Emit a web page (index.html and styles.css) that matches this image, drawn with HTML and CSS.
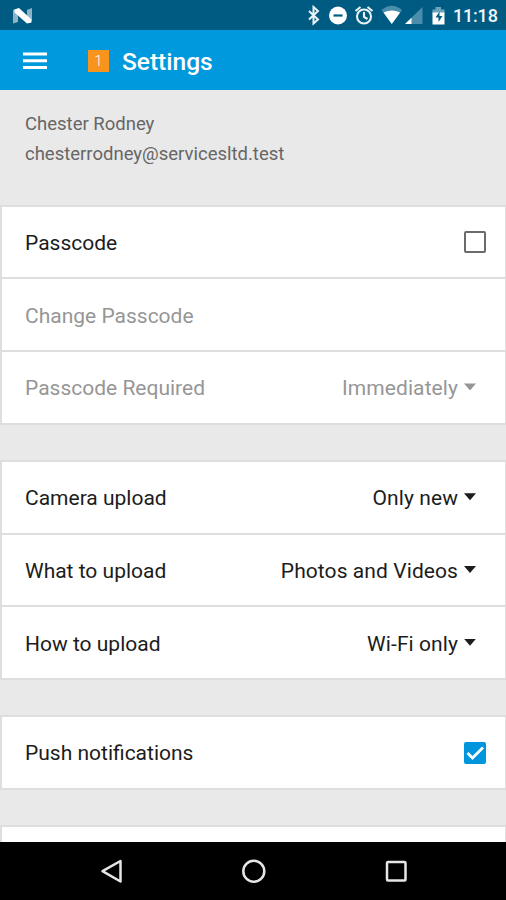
FILE: index.html
```html
<!DOCTYPE html>
<html lang="en">
<head>
<meta charset="utf-8">
<title>Settings</title>
<link rel="stylesheet" href="styles.css">
</head>
<body>
<div class="phone">
  <header class="status">
    <svg class="logo" width="22" height="18" viewBox="0 0 22 18"><path d="M1 3l5-1.500v13.500l-5 1.500z" fill="#8fb4c6"/><path d="M15 3l5-2v12l-5 3z" fill="#8fb4c6"/><path d="M2.500 2.500L7 1l12.500 11.500v3L15 16.500 2.500 5.500z" fill="#fff"/></svg>
    <svg class="status-icons" width="156" height="30" viewBox="300 0 156 30">
      <path d="M309 11l9 8.5-4.5 4V7l4.500 4-9 8.500" fill="none" stroke="#e8f2f7" stroke-width="2"/>
      <circle cx="338" cy="15.500" r="9" fill="#fff"/><path d="M333.500 15.500h9" stroke="#005b83" stroke-width="2.200"/>
      <g fill="none" stroke="#e8f2f7" stroke-width="2.100"><circle cx="364" cy="16.500" r="7"/><path d="M364 12v5l3.500 2M355.500 11l5-4M372.500 11l-5-4"/></g>
      <path d="M381.500 10q10.300-8.500 20.600 0L391.800 24z" fill="#4a8eac"/><path d="M383.500 12.500q8.300-4 16.600 0L391.800 24z" fill="#fff"/>
      <path d="M405 24L422.500 7v17z" fill="#4a8eac"/><path d="M405 24l6.500-6.300V24z" fill="#fff"/>
      <path d="M432.500 9.500h3V7h5.500v2.500h3.500V14h-12z" fill="#6da4bb"/><path d="M432.500 12.500h12v12h-12z" fill="#fff"/><path d="M439.500 11.500l-4 6h3v4.500l4-6h-3z" fill="#005b83"/>
    </svg>
    <span class="clock">11:18</span>
  </header>
  <div class="toolbar">
    <svg class="menu" width="24" height="18" viewBox="0 0 24 18"><path d="M0 2h24M0 8.700h24M0 15.500h24" stroke="#fff" stroke-width="3"/></svg>
    <span class="badge">1</span>
    <h1 class="title">Settings</h1>
  </div>
  <main class="content">
    <section class="account">
      <div class="name">Chester Rodney</div>
      <div class="email">chesterrodney@servicesltd.test</div>
    </section>
    <section class="group">
      <div class="row"><span class="label">Passcode</span><span class="checkbox"></span></div>
      <div class="row disabled"><span class="label">Change Passcode</span></div>
      <div class="row disabled"><span class="label">Passcode Required</span><span class="value">Immediately</span><i class="caret"></i></div>
    </section>
    <section class="group">
      <div class="row"><span class="label">Camera upload</span><span class="value">Only new</span><i class="caret"></i></div>
      <div class="row"><span class="label">What to upload</span><span class="value">Photos and Videos</span><i class="caret"></i></div>
      <div class="row"><span class="label">How to upload</span><span class="value">Wi-Fi only</span><i class="caret"></i></div>
    </section>
    <section class="group">
      <div class="row"><span class="label">Push notifications</span><span class="checkbox checked"><svg width="22" height="22" viewBox="0 0 22 22"><path d="M3.500 11l5 5L19 5.500" fill="none" stroke="#fff" stroke-width="2.800"/></svg></span></div>
    </section>
    <section class="group"><div class="row"></div></section>
  </main>
  <nav class="navbar">
    <svg width="506" height="58" viewBox="0 842 506 58" fill="none" stroke="#e6e6e6" stroke-width="2.500">
      <path d="M120.500 861v20.500L102.500 871.200z" stroke-linejoin="round"/>
      <circle cx="253.800" cy="871.200" r="10.500"/>
      <rect x="387" y="862" width="18.500" height="18.500" rx="1"/>
    </svg>
  </nav>
</div>
</body>
</html>
```
FILE: styles.css
```css
* { box-sizing: border-box; }
body { margin: 0; font-family: Roboto, "Liberation Sans", sans-serif; }
.phone { width: 506px; height: 900px; display: flex; flex-direction: column; overflow: hidden; background: #e9e9e9; }
.status { height: 30px; flex: none; background: #005b83; display: flex; align-items: center; padding-left: 12px; color: #fff; }
.logo { margin-top: 1px; }
.status-icons { margin-left: 266px; flex: none; }
.clock { margin-left: -3px; padding-top: 1px; font-size: 18px; font-weight: 500; letter-spacing: -0.2px; white-space: nowrap; color: #f0f7fa; }
.toolbar { height: 60px; flex: none; background: #0099de; display: flex; align-items: center; padding-left: 23px; color: #fff; }
.menu { margin-top: 2px; }
.badge { width: 21px; height: 22px; margin: 2px 0 0 41px; background: #f7941d; display: flex; align-items: center; justify-content: center; font-size: 15px; font-weight: 300; }
.title { margin: 4px 0 0 13px; font-size: 24.5px; line-height: 30px; font-weight: 500; }
.content { flex: 1; min-height: 0; overflow: hidden; }
.account { height: 114.5px; padding: 19px 25px 0; font-size: 18.5px; line-height: 30px; color: #666; }
.group { border: 2px solid #dedede; border-bottom: 0; border-right-width: 1px; background: #fff; margin-bottom: 35px; }
.row { height: 72.75px; border-bottom: 2px solid #dedede; display: flex; align-items: center; padding: 2px 19px 0 23px; font-size: 21px; color: #1c1c1c; white-space: nowrap; }
.label { flex: 1; }
.value { letter-spacing: 0.08px; }
.disabled { color: #969696; }
.caret { width: 12px; height: 7px; margin: -3px 10px 0 6px; background: currentColor; clip-path: polygon(0 0, 100% 0, 50% 100%); }
.checkbox { width: 22px; height: 22px; border: 2px solid #6b6b6b; border-radius: 2px; margin-top: -1px; }
.checked { border: 0; background: #0095dc; }
.checked svg { display: block; }
.navbar { height: 58px; flex: none; background: #000; }
.navbar svg { display: block; }
```
